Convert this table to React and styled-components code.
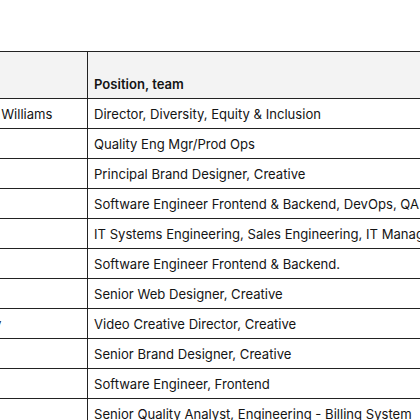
import React from "react";
import styled, { createGlobalStyle } from "styled-components";

const Global = createGlobalStyle`
  html, body { margin: 0; padding: 0; background: #fff; }
  body { font-family: Inter, "Noto Sans", sans-serif; color: #141414; }
`;

const Page = styled.div`
  padding-top: 51px;
  width: 420px;
  overflow: hidden;
`;

const Table = styled.table`
  border-collapse: collapse;
  table-layout: fixed;
  margin-left: -68px;
  width: 608px;
  font-size: 13.1px;
  white-space: nowrap;
`;

const Col = styled.col`
  width: ${(p) => p.$w}px;
`;

const HeadCell = styled.th`
  box-sizing: border-box;
  background: #f3f3f3;
  border: 1px solid #222;
  height: 47px;
  padding: 0 6px 6px;
  text-align: left;
  vertical-align: bottom;
  font-weight: 600;
`;

const Cell = styled.td`
  box-sizing: border-box;
  border: 1px solid #222;
  height: 30px;
  padding: 0 6px;
  text-align: left;
  vertical-align: middle;
  font-weight: 400;
  overflow: hidden;
`;

const rows = [
  ["Marquitta Williams", "Director, Diversity, Equity & Inclusion"],
  ["Ann Li", "Quality Eng Mgr/Prod Ops"],
  ["Ben Su", "Principal Brand Designer, Creative"],
  ["Raj Oh", "Software Engineer Frontend & Backend, DevOps, QA"],
  ["Leo Ma", "IT Systems Engineering, Sales Engineering, IT Management"],
  ["Kai Wu", "Software Engineer Frontend & Backend."],
  ["Eva Lo", "Senior Web Designer, Creative"],
  ["Kit Tracey", "Video Creative Director, Creative"],
  ["Mia Ng", "Senior Brand Designer, Creative"],
  ["Ian Ho", "Software Engineer, Frontend"],
  ["Zoe Yu", "Senior Quality Analyst, Engineering - Billing System"],
];

export default function App() {
  return (
    <Page>
      <Global />
      <Table>
        <colgroup>
          <Col $w={155} />
          <Col $w={453} />
        </colgroup>
        <thead>
          <tr>
            <HeadCell></HeadCell>
            <HeadCell>Position, team</HeadCell>
          </tr>
        </thead>
        <tbody>
          {rows.map(([n, p]) => (
            <tr key={n}>
              <Cell>{n}</Cell>
              <Cell>{p}</Cell>
            </tr>
          ))}
        </tbody>
      </Table>
    </Page>
  );
}
